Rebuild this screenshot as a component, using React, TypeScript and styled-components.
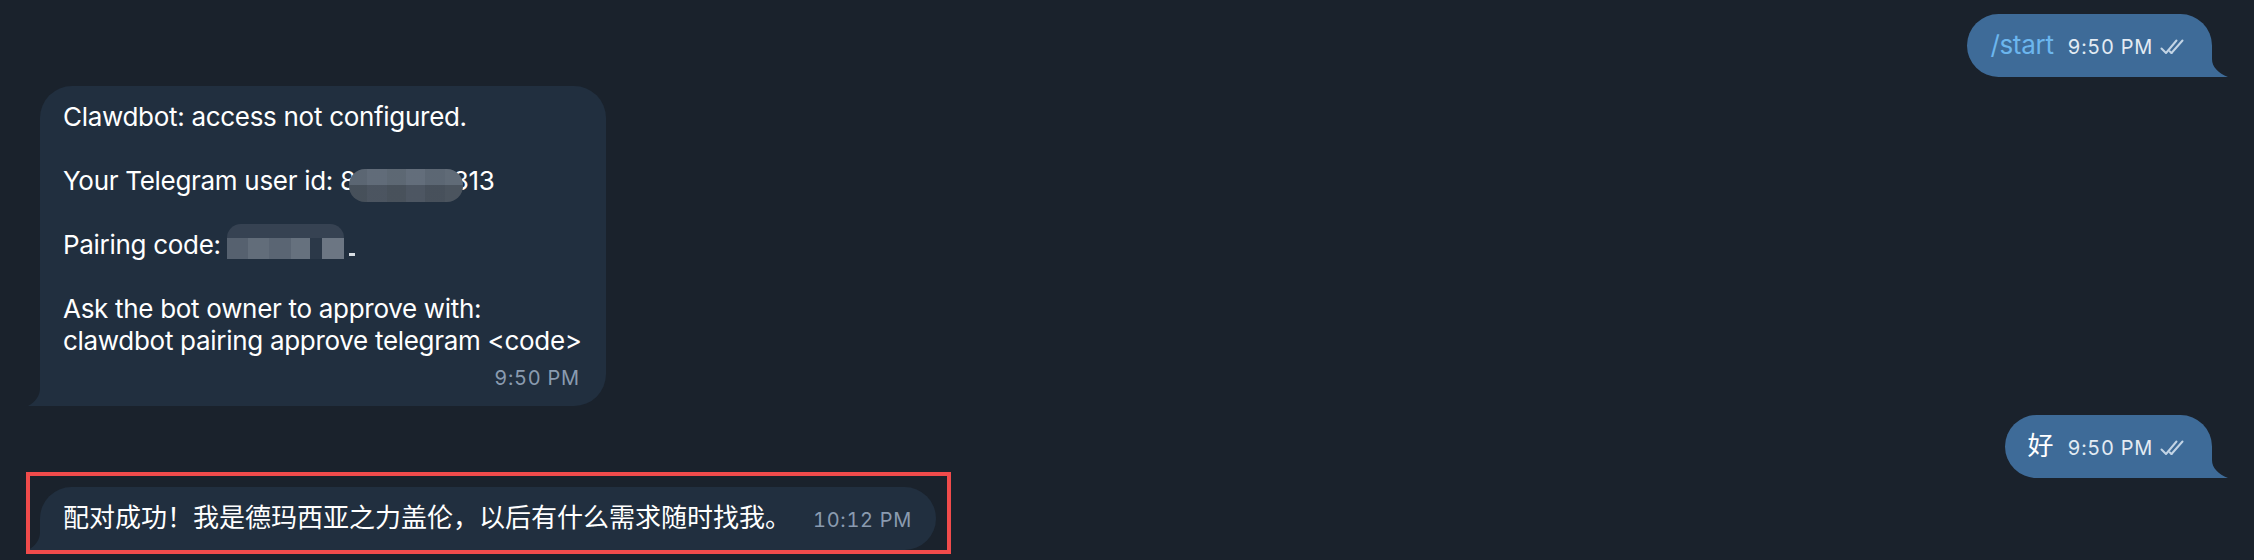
import React from "react";
import styled, { createGlobalStyle } from "styled-components";

const GlobalStyle = createGlobalStyle`
  html, body {
    margin: 0;
    padding: 0;
    background: #1a222c;
  }

  body {
    width: 2254px;
    height: 560px;
    overflow: hidden;
    font-family: Inter, "Noto Sans CJK SC", sans-serif;
    -webkit-font-smoothing: antialiased;
  }
`;

const Chat = styled.main`
  display: flex;
  flex-direction: column;
  gap: 9px;

  height: 560px;
  box-sizing: border-box;
  padding: 14px 42px 0 40px;

  background: #1a222c;
`;

const Row = styled.div<{ $out?: boolean }>`
  position: relative;
  display: flex;
  justify-content: ${(p) => (p.$out ? "flex-end" : "flex-start")};
`;

// red annotation frame drawn over the last message
const MarkedRow = styled(Row)`
  &::after {
    content: "";
    position: absolute;
    left: -14px;
    top: -15px;
    width: 925px;
    height: 82px;
    box-sizing: border-box;
    border: 4px solid #f04b4b;
    pointer-events: none;
  }
`;

const Bubble = styled.div<{ $out?: boolean }>`
  position: relative;

  padding: 15px 24px 16px 23px;

  color: #ffffff;
  font-size: 26px;
  line-height: 32px;
  letter-spacing: -0.3px;

  background: ${(p) => (p.$out ? "#3e6b98" : "#212f3f")};
  border-radius: ${(p) => (p.$out ? "32px 32px 8px 32px" : "32px 32px 32px 8px")};
`;

const TailSvg = styled.svg<{ $out?: boolean }>`
  position: absolute;
  bottom: 0;
  ${(p) => (p.$out ? "right: -16px; transform: scaleX(-1);" : "left: -12px;")}
`;

const Tail = ({ out }: { out?: boolean }) => {
  const reach = out ? 16 : 12;
  const w = reach + 12;
  return (
    <TailSvg $out={out} width={w} height={20} viewBox={`0 0 ${w} 20`}>
      <path
        d={`M${reach} 2 C${reach} 10 ${reach * 0.6} 16 0 20 L${w} 20 L${w} 0 L${reach} 0 Z`}
        fill={out ? "#3e6b98" : "#212f3f"}
      />
    </TailSvg>
  );
};

const Inline = styled.div<{ $gap?: number }>`
  display: flex;
  align-items: baseline;
  gap: ${(p) => p.$gap ?? 14}px;
`;

const Line = styled.div<{ $spaced?: boolean }>`
  margin-top: ${(p) => (p.$spaced ? "32px" : "0")};
  white-space: nowrap;
`;

const Hanzi = styled.span`
  letter-spacing: 0;
`;

const Command = styled.span`
  color: #6cb6ee;
`;

const Time = styled.span<{ $out?: boolean }>`
  font-size: 20px;
  line-height: 24px;
  letter-spacing: 0.7px;
  font-variant-numeric: tabular-nums;
  color: ${(p) => (p.$out ? "#e3ebf3" : "#8a9bb0")};
`;

const Footer = styled.div`
  display: flex;
  justify-content: flex-end;
  margin-top: 9px;
  padding-right: 2px;
  line-height: 24px;
`;

const Meta = styled.span`
  display: inline-flex;
  align-items: baseline;
  gap: 7px;
`;

const CheckSvg = styled.svg`
  align-self: flex-end;
  margin-bottom: 4px;
`;

const Checks = () => (
  <CheckSvg
    width="28"
    height="16"
    viewBox="0 0 28 16"
    fill="none"
    stroke="#c3d4e5"
    strokeWidth="2"
    strokeLinecap="round"
    strokeLinejoin="round"
  >
    <path d="M1.5 9.5 L6 14 L16.5 1.5" />
    <path d="M11.5 14 L22.5 1.5" />
    <path d="M9.6 12.2 L11.5 14" />
  </CheckSvg>
);

// pixelated privacy blur over the user id
const IdBlur = styled.span`
  position: relative;
  z-index: 1;
  display: inline-block;

  width: 114px;
  height: 33px;
  margin: 0 -10px -6px -7px;
  vertical-align: -6px;

  border-radius: 16px;
  background:
    linear-gradient(to bottom, rgba(255, 255, 255, 0.03) 0 50%, rgba(0, 0, 0, 0.18) 50% 100%),
    linear-gradient(
      to right,
      #56616e 0 16%,
      #5c6775 16% 33%,
      #58636f 33% 50%,
      #5e6977 50% 67%,
      #57626f 67% 84%,
      #5b6673 84% 100%
    );
`;

const CodeBlur = styled.span`
  display: inline-block;

  width: 117px;
  height: 35px;
  margin: -5px 0 0 -1px;
  vertical-align: -5px;

  border-radius: 14px 14px 0 0;
  background:
    linear-gradient(to bottom, #364252 0 40%, transparent 40% 100%),
    linear-gradient(
      to right,
      #56616f 0 18%,
      #626d7a 18% 36%,
      #5a6573 36% 55%,
      #66717e 55% 71%,
      #2b3848 71% 81%,
      #6c7683 81% 100%
    );
`;

const Stub = styled.span`
  display: inline-block;
  width: 6px;
  height: 3px;
  margin-left: 5px;
  vertical-align: -2px;
  background: #d8dde3;
`;

const App: React.FC = () => {
  return (
    <>
      <GlobalStyle />
      <Chat>
        <Row $out>
          <Bubble $out>
            <Inline>
              <Command>/start</Command>
              <Meta>
                <Time $out>9:50 PM</Time>
                <Checks />
              </Meta>
            </Inline>
            <Tail out />
          </Bubble>
        </Row>

        <Row>
          <Bubble>
            <Line>Clawdbot: access not configured.</Line>
            <Line $spaced>
              Your Telegram user id: 8<IdBlur />813
            </Line>
            <Line $spaced>
              Pairing code: <CodeBlur />
              <Stub />
            </Line>
            <Line $spaced>Ask the bot owner to approve with:</Line>
            <Line>clawdbot pairing approve telegram &lt;code&gt;</Line>
            <Footer>
              <Time>9:50 PM</Time>
            </Footer>
            <Tail />
          </Bubble>
        </Row>

        <Row $out>
          <Bubble $out>
            <Inline>
              <Hanzi>好</Hanzi>
              <Meta>
                <Time $out>9:50 PM</Time>
                <Checks />
              </Meta>
            </Inline>
            <Tail out />
          </Bubble>
        </Row>

        <MarkedRow>
          <Bubble>
            <Inline $gap={22}>
              <Hanzi>配对成功！我是德玛西亚之力盖伦，以后有什么需求随时找我。</Hanzi>
              <Time>10:12 PM</Time>
            </Inline>
            <Tail />
          </Bubble>
        </MarkedRow>
      </Chat>
    </>
  );
};

export default App;
